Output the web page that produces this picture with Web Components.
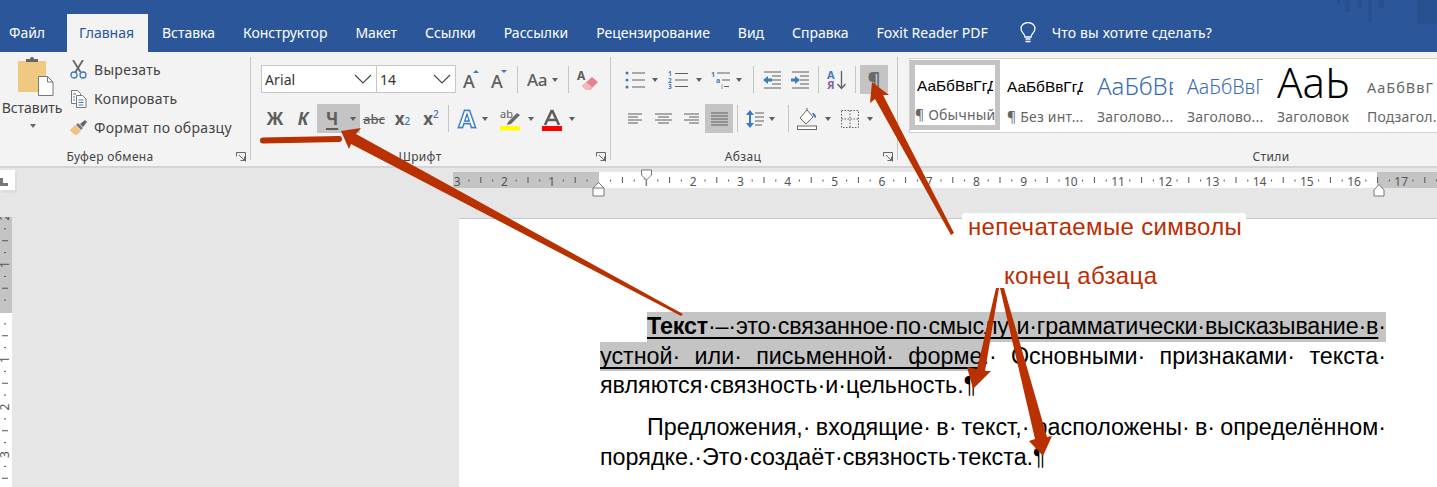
<!DOCTYPE html>
<html lang="ru"><head><meta charset="utf-8"><title>Word</title>
<style>
html,body{margin:0;padding:0;width:1437px;height:487px;overflow:hidden;background:#e6e6e6;font-family:"Noto Sans",sans-serif}
word-app{display:block}
svg{overflow:visible}
</style></head><body>
<word-app>
  <word-titlebar></word-titlebar>
  <word-ribbon>
    <ribbon-group label="Буфер обмена" launcher style="width:251px;--top:4px;--lp:16px">
      <tool-row style="height:auto">
        <paste-btn></paste-btn>
        <clip-list></clip-list>
      </tool-row>
    </ribbon-group>
    <ribbon-group label="Шрифт" launcher style="width:360px;--pad:10px;--lp:7px">
      <tool-row>
        <font-combo w="116" value="Arial"></font-combo><font-combo w="80" value="14" style="margin-left:-1px"></font-combo>
        <tool-btn w="29" style="margin-left:1px"><svg width="20" height="24" viewBox="0 0 20 24"><text x="1" y="20" font-family="Noto Sans" font-size="18" fill="#5e5e5e" font-weight="500">A</text><path d="M11 5l3-3 3 3z" fill="#3f78b8"/></svg></tool-btn>
        <tool-btn w="28"><svg width="20" height="24" viewBox="0 0 20 24"><text x="1" y="20" font-family="Noto Sans" font-size="18" fill="#5e5e5e" font-weight="500">A</text><path d="M11 2l3 3 3-3z" fill="#3f78b8"/></svg></tool-btn>
        <tool-sep w="6"></tool-sep>
        <tool-btn w="45" pl="7" gap="5" caret><span style="font:500 17px 'Noto Sans';color:#5e5e5e;letter-spacing:-.3px">Aa</span></tool-btn>
        <tool-sep w="6"></tool-sep>
        <tool-btn w="34"><svg width="22" height="22" viewBox="0 0 22 22"><text x="0" y="11" font-family="Noto Sans" font-size="12" font-weight="700" fill="#5e5e5e">A</text><path d="M5 17L15 8l6 5-8 8H9z" fill="#e8808e"/><path d="M5 17l4-4 6 5-3 3H9z" fill="#f3b9c1"/></svg></tool-btn>
      </tool-row>
      <tool-row style="margin-top:10px">
        <tool-btn w="28"><b style="font:700 17px 'Noto Sans';color:#5e5e5e">Ж</b></tool-btn>
        <tool-btn w="28"><b style="font:italic 700 17px 'Noto Sans';color:#5e5e5e">К</b></tool-btn>
        <tool-btn w="43" on pl="9" gap="12" caret><b style="font:700 17px 'Noto Sans';color:#5e5e5e;text-decoration:underline;text-underline-offset:3px;text-decoration-thickness:1.5px">Ч</b></tool-btn>
        <tool-btn w="28"><span style="font:500 13px 'Noto Sans';color:#5e5e5e;text-decoration:line-through">abc</span></tool-btn>
        <tool-btn w="29"><span style="font:700 17px 'Noto Sans';color:#5e5e5e">x<span style="font-size:10px;color:#3f78b8;font-weight:500">2</span></span></tool-btn>
        <tool-btn w="28"><span style="font:700 17px 'Noto Sans';color:#5e5e5e">x<sup style="font-size:10px;color:#3f78b8;font-weight:500;line-height:0">2</sup></span></tool-btn>
        <tool-sep w="6"></tool-sep>
        <tool-btn w="44" pl="7" gap="6" caret><svg width="18" height="20" viewBox="0 0 18 20"><path d="M6.500 1.500h5l6 17h-4l-1.300-4H5.800l-1.300 4h-4z" fill="#fff" stroke="#bcd6ef" stroke-width="2.500"/><path d="M6.500 1.500h5l6 17h-4l-1.300-4H5.800l-1.300 4h-4zM9 5l-2.300 7h4.600z" fill="#fff" stroke="#3a7cc4" stroke-width="1.300"/></svg></tool-btn>
        <tool-btn w="44" pl="4" gap="7" caret><svg width="22" height="24" viewBox="0 0 22 24"><text x="1" y="11" font-family="Noto Sans" font-size="11" fill="#5e5e5e">ab</text><path d="M9 15L18 6l3 2-9 9-4 1z" fill="#6a6a6a"/><rect x="1" y="19" width="20" height="4.500" fill="#ffff00"/></svg></tool-btn>
        <tool-btn w="44" pl="3" gap="7" caret><svg width="20" height="24" viewBox="0 0 20 24"><path d="M10 3L3 18M10 3l7 15M5.500 13h9" fill="none" stroke="#5e5e5e" stroke-width="2.600"/><rect x="0" y="19" width="20" height="5" fill="#f00"/></svg></tool-btn>
      </tool-row>
    </ribbon-group>
    <ribbon-group label="Абзац" launcher style="width:287px;--pad:7px;--lp:8px">
      <tool-row>
        <tool-btn w="46" pl="7" gap="7" caret><svg width="20" height="18" viewBox="0 0 20 18"><g fill="#3f78b8"><circle cx="2" cy="2" r="1.500"/><circle cx="2" cy="9" r="1.500"/><circle cx="2" cy="16" r="1.500"/></g><path d="M7 2h13M7 9h13M7 16h13" stroke="#5e5e5e"/></svg></tool-btn>
        <tool-btn w="42" pl="4" gap="8" caret><svg width="20" height="18" viewBox="0 0 20 18"><g font-family="Noto Sans" font-size="6.500" font-weight="700" fill="#3f78b8"><text x="0" y="5">1</text><text x="0" y="11.500">2</text><text x="0" y="18">3</text></g><path d="M7 2.500h13M7 9h13M7 15.500h13" stroke="#5e5e5e"/></svg></tool-btn>
        <tool-btn w="42" pl="5" gap="6" caret><svg width="19" height="18" viewBox="0 0 19 18"><g font-family="Noto Sans" font-size="7" font-weight="700" fill="#3f78b8"><text x="0" y="6">1</text><text x="5" y="12">a</text></g><text x="10" y="18" font-family="Noto Sans" font-size="7" fill="#3f78b8">i</text><path d="M6 2h13M11 9h8M13 15.500h5" stroke="#5e5e5e"/></svg></tool-btn>
        <tool-sep w="10"></tool-sep>
        <tool-btn w="28"><svg width="18" height="18" viewBox="0 0 18 18"><path d="M1 1h17M9 5h9M9 9h9M9 13h9M1 17h17" stroke="#5e5e5e"/><path d="M0 9l5-4v2.500h4v3H5V13z" fill="#3a7cc4"/></svg></tool-btn>
        <tool-btn w="28"><svg width="18" height="18" viewBox="0 0 18 18"><path d="M1 1h17M9 5h9M9 9h9M9 13h9M1 17h17" stroke="#5e5e5e"/><path d="M9 9L4 5v2.500H0v3h4V13z" fill="#3a7cc4"/></svg></tool-btn>
        <tool-sep w="8"></tool-sep>
        <tool-btn w="30"><svg width="20" height="20" viewBox="0 0 20 20"><text x="0" y="9" font-family="Noto Sans" font-size="11" font-weight="700" fill="#3a7cc4">А</text><text x="0" y="19" font-family="Noto Sans" font-size="11" font-weight="700" fill="#8a5aa8">Я</text><path d="M14.500 1v17M10.500 14l4 4.500 4-4.500" fill="none" stroke="#5e5e5e" stroke-width="1.300"/></svg></tool-btn>
        <tool-sep w="6"></tool-sep>
        <tool-btn w="28" on style="margin-left:2px"><span style="font:700 20px 'Noto Sans';color:#6a6a6a">¶</span></tool-btn>
      </tool-row>
      <tool-row style="margin-top:10px">
        <tool-btn w="28" style="margin-left:3px"><svg width="15" height="12" viewBox="0 0 15 12"><path d="M0 1h14M0 4h10M0 7h14M0 10h10" stroke="#5e5e5e"/></svg></tool-btn>
        <tool-btn w="28"><svg width="17" height="12" viewBox="0 0 17 12"><path d="M0 1h17M3 4h11M0 7h17M3 10h11" stroke="#5e5e5e"/></svg></tool-btn>
        <tool-btn w="28"><svg width="15" height="12" viewBox="0 0 15 12"><path d="M0 1h15M5 4h10M0 7h15M5 10h10" stroke="#5e5e5e"/></svg></tool-btn>
        <tool-btn w="28" on><svg width="17" height="14" viewBox="0 0 17 14"><path d="M0 1h17M0 4h17M0 7h17M0 10h17M0 13h17" stroke="#5e5e5e"/></svg></tool-btn>
        <tool-sep w="8"></tool-sep>
        <tool-btn w="43" pl="5" gap="5" caret><svg width="18" height="20" viewBox="0 0 18 20"><path d="M4 1L0 6h3v8H0l4 5 4-5H5V6h3z" fill="#3a7cc4"/><path d="M9 4h9M9 8h9M9 12h9M9 16h7" stroke="#5e5e5e"/></svg></tool-btn>
        <tool-sep w="8"></tool-sep>
        <tool-btn w="44" pl="5" gap="7" caret><svg width="21" height="22" viewBox="0 0 21 22"><path d="M10 2L3 10l6 6 7-7z" fill="#fff" stroke="#6a6a6a"/><path d="M10 2V0" stroke="#6a6a6a"/><path d="M15 5c3 0 4 2 4 5l-2-1z" fill="#3a7cc4"/><rect x=".5" y="18" width="19" height="3.500" fill="#fff" stroke="#6a6a6a"/></svg></tool-btn>
        <tool-btn w="44" pl="5" gap="8" caret><svg width="18" height="18" viewBox="0 0 18 18"><path d="M.5.500h17v17H.5zM9 .5v17M.5 9h17" fill="none" stroke="#5e5e5e" stroke-dasharray="1.500 1.500"/></svg></tool-btn>
      </tool-row>
    </ribbon-group>
    <ribbon-group label="Стили" style="flex:1;--pad:11px;--top:7px;--lc:746px">
      <style-gallery>
        <style-item label="¶ Обычный" selected><span style="font:15.400px 'Liberation Sans';color:#000">АаБбВвГгД</span></style-item>
        <style-item label="¶ Без инт..."><span style="font:15.400px 'Liberation Sans';color:#000">АаБбВвГгД</span></style-item>
        <style-item label="Заголово..."><span style="font:300 24px 'Noto Sans';color:#3a6db0;position:relative;top:-1px">АаБбВв</span></style-item>
        <style-item label="Заголово..."><span style="font:300 19.500px 'Noto Sans';color:#3a6db0">АаБбВвГ</span></style-item>
        <style-item label="Заголовок"><span style="font:300 42px 'Noto Sans';color:#000;position:relative;top:-5px">АаЬ</span></style-item>
        <style-item label="Подзагол..."><span style="font:14.500px 'Noto Sans';color:#666;letter-spacing:1px">АаБбВвГ</span></style-item>
      </style-gallery>
    </ribbon-group>
  </word-ribbon>
  <ruler-strip></ruler-strip>
  <word-workspace></word-workspace>
</word-app>
<anno-layer></anno-layer>
<script>
const def=(n,c)=>customElements.define(n,c);
class Base extends HTMLElement{
  constructor(html){super();this.attachShadow({mode:'open'}).innerHTML=html;}
}
const UI='"Noto Sans",sans-serif';
def('word-titlebar',class extends Base{constructor(){
  const tabs=[['Файл','p0'],['Главная','on'],['Вставка'],['Конструктор'],['Макет'],['Ссылки'],['Рассылки'],['Рецензирование'],['Вид'],['Справка'],['Foxit Reader PDF']];
  super(`<style>
  :host{display:flex;height:52px;background:#2b579a;color:#fff;font:14px/1 ${UI};letter-spacing:-.02px;position:relative;overflow:hidden}
  nav{display:flex;align-items:stretch;height:38px;margin-top:14px}
  a{display:flex;align-items:center;padding:0 14px 1px;white-space:nowrap}
  a.p0{padding:0 22px 1px 9px}
  a.on{background:#f3f3f3;color:#2b579a;padding:0 14px 1px 12px}
  .tell{display:flex;align-items:center;height:38px;margin-top:14px;margin-left:17px;gap:15px;letter-spacing:.15px}
  .deco{position:absolute;left:1337px;top:0}
  </style><nav>${tabs.map(t=>`<a class="${t[1]||''}">${t[0]}</a>`).join('')}</nav>
  <div class="tell"><svg width="18" height="22" viewBox="0 0 18 22"><path d="M6 15c0-3-4-4.500-4-8.500a7 6 0 0 1 14 0C16 10.500 12 12 12 15z" fill="none" stroke="#fff" stroke-width="1.300"/><path d="M6.500 17h5M6.500 19.500h5" stroke="#fff" stroke-width="1.300"/></svg><span>Что вы хотите сделать?</span></div>
  <svg class="deco" width="100" height="26" viewBox="0 0 100 26"><g fill="#27508e"><rect x="0" y="0" width="3" height="5"/><rect x="8" y="0" width="5" height="12"/><rect x="20" y="0" width="5" height="8"/><rect x="31" y="0" width="4" height="22"/><rect x="42" y="0" width="5" height="8"/><rect x="80" y="0" width="20" height="24"/></g></svg>`);
}});
def('word-ribbon',class extends Base{constructor(){super(`<style>
  :host{display:flex;height:114px;background:#f3f3f3;border-bottom:2px solid #d4d4d4;color:#444}
  </style><slot></slot>`);}});
def('ribbon-group',class extends Base{constructor(){super(`<style>
  :host{display:flex;flex-direction:column;height:114px;box-sizing:border-box;position:relative;flex:none}
  :host::after{content:"";position:absolute;right:0;top:5px;bottom:6px;width:1px;background:#c6c6c6}
  .c{flex:1;min-height:0;padding:var(--top,13px) 0 0 var(--pad,0)}
  .f{display:flex;height:18px;align-items:center;font:12px/18px ${UI};color:#444;letter-spacing:.35px}
  .l{flex:1;text-align:center;padding-right:var(--lp,0);}
  .l.fixed{flex:none;width:var(--lc)}
  svg{margin-right:5px;flex:none;margin-top:-1px}
  </style><div class="c"><slot></slot></div><div class="f"><span class="l"></span></div>`);}
  connectedCallback(){const s=this.shadowRoot,f=s.querySelector('.f'),l=s.querySelector('.l');l.textContent=this.getAttribute('label');
    if(getComputedStyle(this).getPropertyValue('--lc').trim())l.classList.add('fixed');
    if(this.hasAttribute('launcher')&&!f.querySelector('svg'))f.insertAdjacentHTML('beforeend','<svg width="10" height="10" viewBox="0 0 10 10"><path d="M.5.500h9v9M.5.500v4M.5.500h4M3 3l5.500 5.500M4.500 8.500h4v-4" fill="none" stroke="#666"/></svg>');}
});
def('tool-row',class extends Base{constructor(){super(`<style>:host{display:flex;align-items:stretch;height:29px}</style><slot></slot>`);}});
def('tool-sep',class extends Base{constructor(){super(`<style>:host{display:flex;justify-content:center;flex:none}i{display:block;width:1px;background:#c6c6c6;height:27px;margin-top:1px}</style><i></i>`);}
  connectedCallback(){this.style.width=this.getAttribute('w')+'px';}});
def('tool-btn',class extends Base{constructor(){super(`<style>
  :host{display:flex;align-items:center;justify-content:center;flex:none;height:29px;box-sizing:border-box;line-height:1}
  :host([on]){background:#c4c4c4}
  :host([pl]){justify-content:flex-start}
  ::slotted(*){flex:none}
  .k{width:0;height:0;border:3.500px solid transparent;border-top:4px solid #5e5e5e;border-bottom:0;flex:none;display:none}
  :host([caret]) .k{display:block}
  </style><slot></slot><i class="k"></i>`);}
  connectedCallback(){this.style.width=this.getAttribute('w')+'px';
    if(this.hasAttribute('pl'))this.style.paddingLeft=this.getAttribute('pl')+'px';
    if(this.hasAttribute('gap'))this.style.gap=this.getAttribute('gap')+'px';}});
def('font-combo',class extends Base{constructor(){super(`<style>
  :host{display:flex;align-items:center;flex:none;height:28px;box-sizing:border-box;background:#fff;border:1px solid #c6c6c6;font:14px ${UI};color:#333;padding:0 4px 0 3px;justify-content:space-between;letter-spacing:.1px}
  </style><span></span><svg width="18" height="10" viewBox="0 0 18 10"><path d="M1 1l8 8 8-8" fill="none" stroke="#444" stroke-width="1.100"/></svg>`);}
  connectedCallback(){this.style.width=this.getAttribute('w')+'px';this.shadowRoot.querySelector('span').textContent=this.getAttribute('value');}});
def('paste-btn',class extends Base{constructor(){super(`<style>
  :host{display:flex;flex-direction:column;align-items:center;width:62px;flex:none;font:14px/18px ${UI};color:#444;letter-spacing:-.05px}
  svg{margin:0 0 0 10px;display:block;flex:none}
  .t{margin:2px 0 0 2px;white-space:nowrap}
  i{display:block;width:0;height:0;border:3.500px solid transparent;border-top:4px solid #666;border-bottom:0;margin-top:7px;margin-left:4px}
  </style><svg width="36" height="41" viewBox="0 0 36 41"><rect x="0" y="5" width="28" height="31" rx="1" fill="#eec97f"/><path d="M8 6V3h4a2 2 0 0 1 4 0h4v3z" fill="#666"/><path d="M20.500 20.500h9l5.500 5.500v13.500H20.500z" fill="#fff" stroke="#777"/><path d="M29.500 20.500v5.500H35" fill="none" stroke="#777"/></svg><span class="t">Вставить</span><i></i>`);}});
def('clip-list',class extends Base{constructor(){super(`<style>
  :host{display:flex;flex-direction:column;font:14px/29px ${UI};color:#444;letter-spacing:.3px;margin-top:-1px}
  div{display:flex;align-items:center;height:29px;gap:7px;padding-left:8px;white-space:nowrap}
  svg{flex:none}
  </style>
  <div><svg width="17" height="19" viewBox="0 0 17 19"><path d="M3 0l7.500 12M13 0L5.500 12" stroke="#666" stroke-width="1.800" fill="none"/><circle cx="4" cy="15" r="3" fill="none" stroke="#3f78b8" stroke-width="1.300"/><circle cx="13" cy="15" r="3" fill="none" stroke="#3f78b8" stroke-width="1.300"/></svg><span>Вырезать</span></div>
  <div><svg width="17" height="18" viewBox="0 0 17 18"><path d="M1.500 .5h6l3 3v10h-9z" fill="#fff" stroke="#777"/><path d="M6.500 5.500h6l3.500 3.500v8.500H6.500z" fill="#fff" stroke="#777"/><path d="M3 4h3M3 7h2M3 10h2M8.500 10h5M8.500 12.500h5M8.500 15h5" stroke="#3f78b8"/></svg><span>Копировать</span></div>
  <div><svg width="17" height="17" viewBox="0 0 17 17"><path d="M0 11l5-5 6 6-4 4c-3 0-5-2-7-5z" fill="#eec483"/><path d="M6 6l5 5 2-2-5-5z" fill="#777"/><path d="M10 5l5-4 2 2-4 5z" fill="#666"/></svg><span>Формат по образцу</span></div>`);}});
def('style-gallery',class extends Base{constructor(){super(`<style>
  :host{display:flex;height:75px;box-sizing:border-box;margin-top:-1px;background:#fff;border:1px solid #d2d2d2;border-right:0;padding:1px 0 0 0;overflow:hidden;position:relative}
  </style><slot></slot>`);}});
def('style-item',class extends Base{constructor(){super(`<style>
  :host{display:flex;flex-direction:column;width:90px;height:70px;flex:none;box-sizing:border-box;padding:0 0 0 7px;overflow:hidden}
  :host([selected]){border:5px solid #c4c4c4;padding-left:2px}
  .p{height:47px;display:flex;align-items:center;white-space:nowrap;overflow:hidden;width:76px;padding-top:6px;box-sizing:border-box}
  :host([selected]) .p{height:42px;padding-top:1px}
  .t{font:14px/20px ${UI};color:#666;white-space:nowrap;letter-spacing:.2px}
  :host([selected]) .t{margin-left:-2px}
  </style><div class="p"><slot></slot></div><div class="t"></div>`);}
  connectedCallback(){this.shadowRoot.querySelector('.t').textContent=this.getAttribute('label');}});
def('ruler-strip',class extends Base{constructor(){
  const U=47.2,O0=598.8-453;let m='';
  for(let i=-3;i<=18;i++){const cx=O0+U*i;
    for(let q=0;q<4;q++){const x=cx+U*q/4; if(x<0||x>984)continue;
      if(q==0){ if(i!=0) m+=`<text x="${x}" y="17.500" text-anchor="middle" font-family="Noto Sans" font-size="12" fill="#555">${Math.abs(i)}</text>`;}
      else if(q==2) m+=`<path d="M${x} 9v6" stroke="#555"/>`;
      else m+=`<path d="M${x} 11.500v2" stroke="#555"/>`;}
  }
  super(`<style>
  :host{display:flex;height:49px;background:#e6e6e6;overflow:visible;align-items:flex-start;position:relative}
  .c{width:15px;height:20px;background:#fff;margin-top:2px;flex:none;box-shadow:2px 3px 0 #ddd;position:relative;overflow:hidden}
  .c svg{display:block;margin-top:8px}
  .s{width:438px;flex:none}
  .r{flex:none;display:block;overflow:visible}
  </style><div class="c"><svg width="8" height="8" viewBox="0 0 8 8"><path d="M0 0h3v5h5v3H0z" fill="#777"/></svg></div><div class="s"></div>
  <svg class="r" width="984" height="32" viewBox="0 0 984 32">
    <rect x="0" y="4" width="984" height="16" fill="#c4c4c4"/>
    <rect x="146" y="4" width="778" height="16" fill="#fff"/>
    ${m}
    <path d="M188.500 2h10v5l-5 5-5-5z" fill="#fff" stroke="#777"/>
    <path d="M139.500 20l5.500-5.500 5.500 5.500v8h-11zM139.500 20h11" fill="#fff" stroke="#777" transform="translate(.5 0)"/>
    <path d="M921.500 28v-6l5-5.500 5 5.500v6z" fill="#fff" stroke="#777" transform="translate(-.5 0)"/>
  </svg>`);
}});
def('word-workspace',class extends Base{constructor(){
  const U=47.5,O=95;let m='';
  for(let i=-2;i<=4;i++){const c=O+U*i;
    for(let q=0;q<4;q++){const y=c+U*q/4; if(y<0||y>270)continue;
      if(q==0){ if(i!=0) m+=`<text transform="translate(9 ${y}) rotate(-90)" text-anchor="middle" font-family="Noto Sans" font-size="12" fill="#555">${Math.abs(i)}</text>`;}
      else if(q==2) m+=`<path d="M2 ${y}h6" stroke="#555"/>`;
      else m+=`<path d="M4 ${y}h2" stroke="#555"/>`;}
  }
  super(`<style>
  :host{display:flex;height:270px;background:#e6e6e6;overflow:hidden}
  .v{flex:none;display:block}
  .gap{width:447px;flex:none}
  word-page{flex:1;min-width:0}
  </style><svg class="v" width="12" height="270" viewBox="0 0 12 270"><rect width="12" height="270" fill="#fff"/><rect width="12" height="96" fill="#c4c4c4"/>${m}</svg><div class="gap"></div><word-page></word-page>`);
}});
def('word-page',class extends Base{constructor(){super(`<style>
  :host{display:block;margin-top:1px;border-top:1px solid #c8c8c8;background:#fff;padding:93px 51px 0 141px;height:300px;box-sizing:border-box;font:23.300px "Liberation Sans",sans-serif;color:#000}
  .l{height:29.500px;line-height:29.500px;white-space:normal;overflow:visible}
  .j{text-align:justify;text-align-last:justify;word-spacing:-6.400px}
  .n{white-space:nowrap}
  .s1{margin-left:47px;background:#c4c4c4;white-space:nowrap;letter-spacing:-.16px}
  .s2{background:linear-gradient(#c4c4c4,#c4c4c4) 0 0/385px 100% no-repeat}
  .u{text-decoration:underline;text-decoration-thickness:2px;text-underline-offset:3px;text-decoration-skip-ink:none}
  .i{margin-left:47px}
  </style>
  <div class="l s1"><span class="u"><b>Текст</b>·–·это·связанное·по·смыслу·и·грамматически·высказывание·в</span>·</div>
  <div class="l j s2"><span class="u">устной· или· письменной· форме</span>.· Основными· признаками· текста·</div>
  <div class="l n">являются·связность·и·цельность.¶</div>
  <div class="l j i" style="margin-top:12.500px">Предложения,· входящие· в· текст,· расположены· в· определённом·</div>
  <div class="l n">порядке.·Это·создаёт·связность·текста.¶</div>`);}});
def('anno-layer',class extends Base{constructor(){super(`<style>
  :host{position:absolute;left:0;top:0;width:1437px;height:487px;display:block;pointer-events:none}
  svg{position:absolute;left:0;top:0}
  .a{position:absolute;font:24px/1 "Liberation Sans",sans-serif;color:#bd2c00;white-space:nowrap;letter-spacing:.35px}
  .b1{left:962px;top:213px;width:284px;height:28px;background:#fff;border-radius:3px;padding:2px 0 0 6px;box-sizing:border-box}
  .b2{left:1004px;top:264px}
  </style>
  <div class="a b1">непечатаемые символы</div><div class="a b2">конец абзаца</div>
  <svg width="1437" height="487" viewBox="0 0 1437 487"><g fill="#b93100">
  <path d="M263 137.500l76-1.500a3 3 0 0 1 0 6l-76 1.500a3 3 0 0 1 0-6z"/>
  <path d="M341 131l20-3-5 6 327 180-2 2-330-172-2 5z"/>
  <path d="M872 82l17 13-6 0 71 138-3 2-76-136-5 4z"/>
  <path d="M973 389l-6-22 10 2 19-81 3 0-14 83 6 0z"/>
  <path d="M1043 456l-14-15 6-2-35-151 4 0 43 149 5-1z"/>
  </g></svg>`);}});
def('word-app',class extends Base{constructor(){super(`<style>:host{display:block}</style><slot></slot>`);}});
</script>
</body></html>
